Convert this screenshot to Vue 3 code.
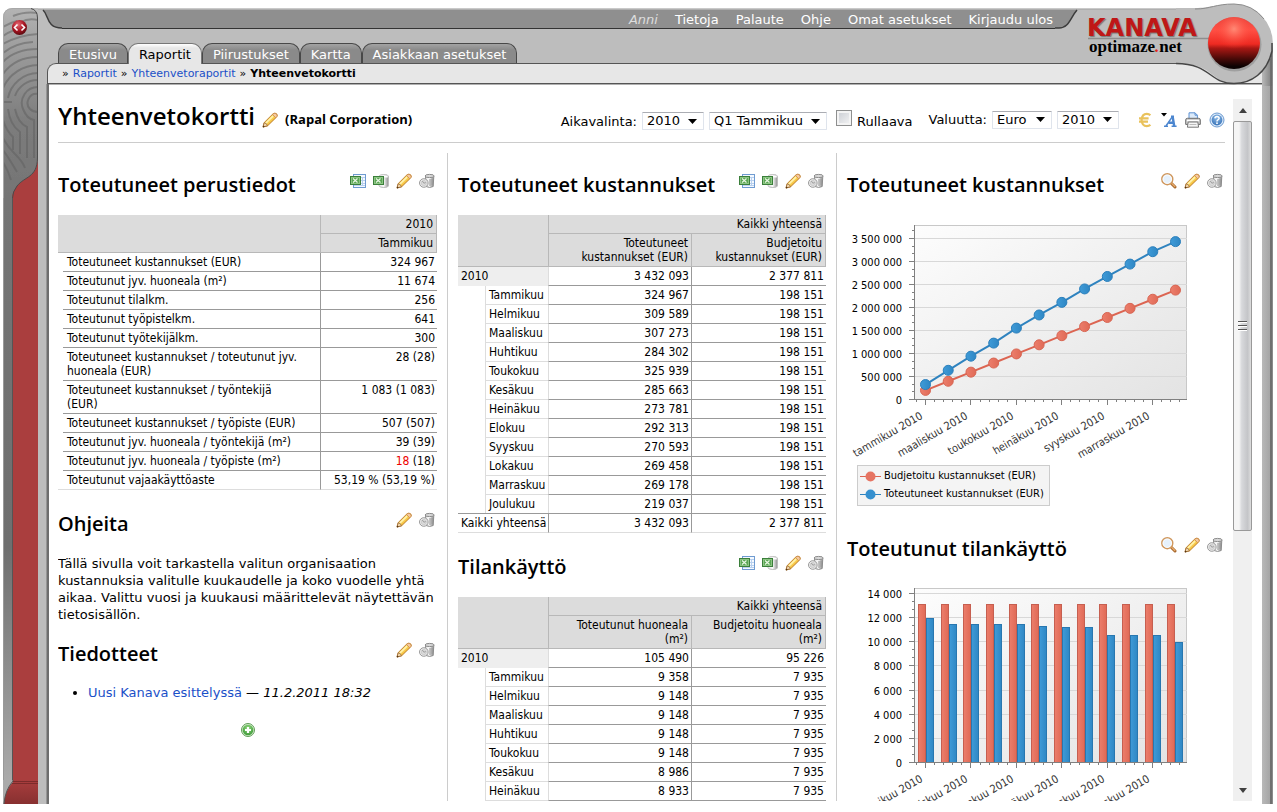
<script setup>
import { ref } from 'vue'

const year = ref('2010')
const period = ref('Q1 Tammikuu')
const rolling = ref(false)
const currency = ref('Euro')
const rateYear = ref('2010')

const userLinks = ['Tietoja', 'Palaute', 'Ohje', 'Omat asetukset', 'Kirjaudu ulos']
const tabs = ['Etusivu', 'Raportit', 'Piirustukset', 'Kartta', 'Asiakkaan asetukset']

const tableTools = [
  { icon: 'xls', label: 'Vie Exceliin' },
  { icon: 'xlsdata', label: 'Vie tiedot Exceliin' },
  { icon: 'pencil', label: 'Muokkaa' },
  { icon: 'trash', label: 'Poista' }
]
const chartTools = [
  { icon: 'lens', label: 'Suurenna' },
  { icon: 'pencil', label: 'Muokkaa' },
  { icon: 'trash', label: 'Poista' }
]
const textTools = tableTools.slice(2)

const basics = [
  ['Toteutuneet kustannukset (EUR)', '324 967'],
  ['Toteutunut jyv. huoneala (m²)', '11 674'],
  ['Toteutunut tilalkm.', '256'],
  ['Toteutunut työpistelkm.', '641'],
  ['Toteutunut työtekijälkm.', '300'],
  ['Toteutuneet kustannukset / toteutunut jyv. huoneala (EUR)', '28 (28)'],
  ['Toteutuneet kustannukset / työntekijä (EUR)', '1 083 (1 083)'],
  ['Toteutuneet kustannukset / työpiste (EUR)', '507 (507)'],
  ['Toteutunut jyv. huoneala / työntekijä (m²)', '39 (39)'],
  ['Toteutunut jyv. huoneala / työpiste (m²)', ' (18)', '18'],
  ['Toteutunut vajaakäyttöaste', '53,19 % (53,19 %)']
]

const months = ['Tammikuu', 'Helmikuu', 'Maaliskuu', 'Huhtikuu', 'Toukokuu', 'Kesäkuu', 'Heinäkuu', 'Elokuu', 'Syyskuu', 'Lokakuu', 'Marraskuu', 'Joulukuu']
const costs = [324967, 309589, 307273, 284302, 325939, 285663, 273781, 292313, 270593, 269458, 269178, 219037]
const areas = [9358, 9148, 9148, 9148, 9148, 8986, 8933]
const fmt = (n) => String(n).replace(/\B(?=(\d{3})+$)/g, ' ')

const pivots = [
  {
    title: 'Toteutuneet kustannukset',
    heads: [['Toteutuneet', 'kustannukset (EUR)'], ['Budjetoitu', 'kustannukset (EUR)']],
    total: ['3 432 093', '2 377 811'],
    rows: costs.map((c, i) => [months[i], fmt(c), '198 151']),
    footer: true
  },
  {
    title: 'Tilankäyttö',
    heads: [['Toteutunut huoneala', '(m²)'], ['Budjetoitu huoneala', '(m²)']],
    total: ['105 490', '95 226'],
    rows: areas.map((a, i) => [months[i], fmt(a), '7 935']),
    footer: false
  }
]

const step = 250 / 11
const xAt = (i) => 78.5 + i * step
const yCost = (v) => 184.5 - (v * 46) / 1000000
let sum = 0
const actual = costs.map((c, i) => ({ x: xAt(i), y: yCost((sum += c)) }))
const budget = costs.map((c, i) => ({ x: xAt(i), y: yCost(198151 * (i + 1)) }))
const line = (pts) => pts.map((p) => `${p.x},${p.y}`).join(' ')
const costTicks = Array.from({ length: 8 }, (_, i) => ({ label: fmt(i * 500000), y: 184.5 - i * 23 }))
const costMinor = Array.from({ length: 23 }, (_, i) => Math.round(184 - (i * 23) / 3) + 0.5)
const areaTicks = Array.from({ length: 8 }, (_, i) => ({ label: fmt(i * 2000), y: Math.round(183 - i * 24.14) + 0.5 }))
const areaMinor = Array.from({ length: 22 }, (_, i) => Math.round(183 - i * 8.05) + 0.5)
const xMinor = Array.from({ length: 30 }, (_, i) => Math.round(69 + i * 9.08) + 0.5)
const xLabels = ['tammikuu', 'maaliskuu', 'toukokuu', 'heinäkuu', 'syyskuu', 'marraskuu'].map((m, i) => ({
  text: m + ' 2010',
  x: Math.round(78 + i * step * 2) + 0.5
}))
const areaActual = [11920, 11420, 11420, 11420, 11420, 11260, 11180, 11180, 10520, 10520, 10520, 9940]
const bars = areaActual.map((v, i) => ({
  x: Math.round(71 + i * 22.65),
  y: Math.round(183 - v * 0.01207)
}))
</script>

<template>
  <div class="page">
    <svg class="sprite" aria-hidden="true">
      <defs>
        <linearGradient id="g-pencil" x1="0" y1="0" x2="1" y2="1">
          <stop offset="0.3" stop-color="#fff0a0" /><stop offset="0.6" stop-color="#f6c23a" /><stop offset="1" stop-color="#d78b1c" />
        </linearGradient>
        <linearGradient id="g-metal" x1="0" x2="1">
          <stop offset="0" stop-color="#e8e8e8" /><stop offset="0.5" stop-color="#fafafa" /><stop offset="1" stop-color="#8e8e8e" />
        </linearGradient>
        <linearGradient id="g-plot" x1="0" y1="0" x2="1" y2="1">
          <stop offset="0" stop-color="#fdfdfd" /><stop offset="1" stop-color="#e3e3e3" />
        </linearGradient>
        <linearGradient id="g-red" x1="0" x2="1">
          <stop offset="0" stop-color="#ec7e6c" /><stop offset="1" stop-color="#e06a56" />
        </linearGradient>
        <linearGradient id="g-blue" x1="0" x2="1">
          <stop offset="0" stop-color="#3f9bd8" /><stop offset="1" stop-color="#2f87c4" />
        </linearGradient>
        <radialGradient id="g-help" cx="0.5" cy="0.3" r="0.7">
          <stop offset="0" stop-color="#8dbbe8" /><stop offset="1" stop-color="#3a74b8" />
        </radialGradient>
        <radialGradient id="g-add" cx="0.5" cy="0.3" r="0.7">
          <stop offset="0" stop-color="#8ed67c" /><stop offset="1" stop-color="#3f9a3a" />
        </radialGradient>
      </defs>
      <symbol id="i-pencil" viewBox="0 0 16 16">
        <path d="M1 15 L2.2 10.6 L11 1.8 Q13 .5 14.6 1.8 Q16 3.4 14.6 5 L5.600 13.8 Z" fill="url(#g-pencil)" stroke="#c07f2c" />
        <path d="M10.6 2.6 L13.8 5.8 L14.8 4.6 Q15.6 3.2 14.4 2 Q13 .9 11.8 1.5 Z" fill="#f5c9a0" stroke="#c98847" stroke-width=".7" />
        <path d="M3.8 11.2 L11 4.2" stroke="#fff3b0" stroke-width="1.4" />
        <path d="M1 15 L2.2 10.8 Q5 11.2 5.400 13.8 Z" fill="#f2d9b0" stroke="#8f5a25" stroke-width=".7" />
        <path d="M.8 15.4 L1.3 13.4 L2.8 14.8 Z" fill="#4a3013" />
      </symbol>
      <symbol id="i-xls" viewBox="0 0 16 16">
        <rect x="3.5" y="1.5" width="12" height="13" fill="#f4f9ff" stroke="#6f9bd1" />
        <path d="M10 4.5h5M10 7.5h5M10 10.5h5M4 12.5h11M12.5 4v9" stroke="#b8d0ee" />
        <rect x=".5" y="3.5" width="10" height="8" fill="#5aa653" stroke="#3b7f3b" />
        <rect x="1.5" y="4.5" width="8" height="6" fill="none" stroke="#8cc583" />
        <path d="M3 5.5 L7.500 9.5 M7.500 5.5 L3 9.5" stroke="#e9f7e4" stroke-width="1.2" />
      </symbol>
      <symbol id="i-xlsdata" viewBox="0 0 16 16">
        <path d="M6 3.5 Q6 1.5 10.8 1.5 Q15.5 1.5 15.5 3.5 V12.5 Q15.5 14.5 10.8 14.5 Q6 14.5 6 12.5 Z" fill="url(#g-metal)" stroke="#bdbdbd" />
        <ellipse cx="10.8" cy="3.4" rx="4.2" ry="1.5" fill="#fff" stroke="#d0d0d0" stroke-width=".6" />
        <rect x=".5" y="3.5" width="10" height="8" fill="#5aa653" stroke="#3b7f3b" />
        <rect x="1.5" y="4.5" width="8" height="6" fill="none" stroke="#8cc583" />
        <path d="M3 5.5 L7.500 9.5 M7.500 5.5 L3 9.5" stroke="#e9f7e4" stroke-width="1.2" />
      </symbol>
      <symbol id="i-trash" viewBox="0 0 16 16">
        <path d="M6.5 3 L7 13.5 Q10.5 15.4 14.2 13.5 L14.8 3 Z" fill="url(#g-metal)" stroke="#8c8c8c" />
        <path d="M11 6v7M13 5.6v7" stroke="#8a8a8a" />
        <ellipse cx="10.6" cy="3" rx="4.6" ry="1.6" fill="#d8d8d8" stroke="#8c8c8c" />
        <circle cx="4.8" cy="10" r="4.3" fill="#ececec" stroke="#9a9a9a" />
        <circle cx="4.8" cy="10" r="2.6" fill="#dcdcdc" stroke="#c2c2c2" stroke-width=".7" />
        <path d="M3.4 8 L4.8 10.2 L6.8 9.6" stroke="#8c8c8c" fill="none" stroke-width=".8" />
      </symbol>
      <symbol id="i-lens" viewBox="0 0 16 16">
        <path d="M10.500 10.500 L14 14" stroke="#a5662b" stroke-width="3" stroke-linecap="round" />
        <path d="M10.8 10.4 L13.8 13.6" stroke="#e7ab6b" stroke-width="1.4" stroke-linecap="round" />
        <circle cx="6.3" cy="6.2" r="5.5" fill="#e6f1fc" stroke="#d0975c" stroke-width="1.4" />
        <circle cx="6.3" cy="6.2" r="4.2" fill="none" stroke="#fff" stroke-width=".8" />
      </symbol>
      <symbol id="i-euro" viewBox="0 0 16 16">
        <path d="M13.4 3.2 Q12 1.8 9.8 1.8 Q5 1.8 4.6 8 Q5 14.2 9.8 14.2 Q12 14.2 13.4 12.8 M2 6.4 H11.6 M2 9.6 H11" fill="none" stroke="#e9c25c" stroke-width="2.2" />
      </symbol>
      <symbol id="i-font" viewBox="0 0 16 16">
        <path d="M0 1 H6 L3 4.4 Z" fill="#000" />
        <path d="M5 14 L11.2 4.8" fill="none" stroke="#4c86cf" stroke-width="1.5" />
        <path d="M11.6 4.4 L13.2 14 M7.4 10.8 H12.4" fill="none" stroke="#4c86cf" stroke-width="2.4" />
        <path d="M3 14.3 H7 M10.6 14.3 H15.600 M10 4.2 H13" stroke="#4c86cf" stroke-width="1.4" />
      </symbol>
      <symbol id="i-print" viewBox="0 0 16 16">
        <path d="M4 7 V.8 H10 L12.4 3.2 V7 Z" fill="#dcebfb" stroke="#5e92d2" />
        <path d="M10 .8 V3.2 H12.4" fill="none" stroke="#5e92d2" />
        <path d="M.7 8 Q.7 6.3 2.4 6.3 H13.6 Q15.3 6.3 15.3 8 V12.4 H.7 Z" fill="#d0d0d0" stroke="#6c6c6c" />
        <path d="M2 8.5h12" stroke="#fff" />
        <path d="M3.2 10 H12.8 L13.6 15.2 H2.4 Z" fill="#f6f6f6" stroke="#777" />
        <path d="M4.4 12.5h7" stroke="#bcbcbc" />
      </symbol>
      <symbol id="i-help" viewBox="0 0 16 16">
        <circle cx="8" cy="8" r="7" fill="#dceafa" stroke="#6d9bd0" />
        <circle cx="8" cy="8" r="5.4" fill="url(#g-help)" />
        <path d="M5.9 6.4 Q6 4.4 8 4.4 Q10.1 4.5 10.1 6.2 Q10 7.3 8.9 7.9 Q8 8.4 8 9.4" fill="none" stroke="#fff" stroke-width="1.5" />
        <rect x="7.2" y="10.4" width="1.6" height="1.6" fill="#fff" />
      </symbol>
      <symbol id="i-add" viewBox="0 0 16 16">
        <circle cx="8" cy="8" r="6.5" fill="#d3ecca" stroke="#5f9d57" />
        <circle cx="8" cy="8" r="5.3" fill="url(#g-add)" />
        <path d="M8 5v6M5 8h6" stroke="#fff" stroke-width="2.2" />
      </symbol>
    </svg>

    <aside class="rail">
      <svg width="35" height="190" viewBox="0 0 35 190">
        <defs>
          <linearGradient id="g-rail" x1="0" y1="0" x2="0" y2="1">
            <stop offset="0" stop-color="#b4b4b4" /><stop offset="0.25" stop-color="#999" />
            <stop offset="0.6" stop-color="#7d7d7d" /><stop offset="1" stop-color="#757575" />
          </linearGradient>
          <radialGradient id="g-knob" cx="0.4" cy="0.3" r="0.7">
            <stop offset="0" stop-color="#e66a75" /><stop offset="0.6" stop-color="#a81522" /><stop offset="1" stop-color="#5e0a10" />
          </radialGradient>
          <clipPath id="c-rail">
            <path d="M0 10 Q0 0 10 0 H28 Q35 2 35 10 V150 C34 170 22 168 14 178 Q9 184 9 190 H0 Z" />
          </clipPath>
        </defs>
        <rect width="35" height="150" fill="#bdbdbd" />
        <rect width="12" height="12" fill="#fff" />
        <rect y="145" width="35" height="45" fill="#aa3e3e" />
        <g clip-path="url(#c-rail)">
          <rect width="35" height="190" fill="url(#g-rail)" />
          <g fill="none" stroke="#5f5f5f" stroke-width="2" opacity="0.5">
            <path d="M35 86 A9 9 0 0 0 27 101 Q30 104 35 104" />
            <path d="M35 79 A16 16 0 0 0 20 101 Q24 111 31 112 V150" />
            <path d="M35 72 A24 24 0 0 0 12 88 M12 101 Q15 115 24 119 V150" />
            <path d="M35 65 A31 31 0 0 0 5 90 M5 101 Q7 117 17 124 V146" />
            <path d="M35 57 A39 39 0 0 0 0 80 M0 94 H9 M0 112 Q3 122 10 129 V142" />
            <path d="M35 49 Q12 49 0 66 M35 41 Q12 41 0 54 M30 34 Q12 35 0 45 M35 26 Q16 27 0 36 M20 20 Q8 22 0 28 M14 13 Q6 15 0 19" />
            <path d="M35 12 Q25 10 18 14 M35 5 Q22 3 10 8 M0 130 Q4 138 12 146 T22 160 M0 142 Q6 150 14 164 M0 154 Q5 162 8 172" />
          </g>
        </g>
        <path d="M10 .5 H28 Q34.5 2 34.5 10 V150 C34 170 22 168 14 178 Q9.5 184 9.5 190" fill="none" stroke="#4b4b4b" />
        <path d="M.5 190 V10 Q.5 .5 10 .5 H28" fill="none" stroke="#a8a8a8" />
        <circle cx="16.5" cy="19.5" r="7.500" fill="url(#g-knob)" />
        <path d="M14.5 16.5 L11.5 19.5 L14.5 22.5 M18.5 16.5 L21.5 19.5 L18.5 22.5" fill="none" stroke="#fff" stroke-width="1.6" />
      </svg>
      <div class="rail-body"></div>
      <svg width="35" height="24" viewBox="0 0 35 24">
        <defs>
          <linearGradient id="g-foot" x1="0" y1="0" x2="0" y2="1">
            <stop offset="0" stop-color="#aa3e3e" /><stop offset="1" stop-color="#873030" />
          </linearGradient>
        </defs>
        <rect width="35" height="24" fill="#aaa" />
        <path d="M10 0 H35 V24 H1 Q2 10 10 2 Z" fill="url(#g-foot)" />
        <path d="M10 0 V1 Q2 10 1 24" fill="none" stroke="#555" />
        <path d="M10 1.5 H35 M9 3.5 H35" stroke="#7c2b2b" />
      </svg>
    </aside>

    <div class="main">
      <header class="header">
        <div class="topbar">
          <svg width="24" height="21" viewBox="0 0 24 21">
            <path d="M5 2 C11 7 8 20 24 20 V2 Z" fill="#8f8f8f" />
            <path d="M5 2 C11 7 8 20 24 20" fill="none" stroke="#3c3c3c" stroke-width="1.5" />
          </svg>
          <nav class="user-nav">
            <em>Anni</em>
            <a v-for="l in userLinks" :key="l" href="#">{{ l }}</a>
          </nav>
          <svg width="24" height="21" viewBox="0 0 24 21">
            <path d="M0 2 H22 C15 10 14 20 4 20 H0 Z" fill="#8f8f8f" />
            <path d="M22 2 C15 10 14 20 4 20 H0" fill="none" stroke="#3c3c3c" stroke-width="1.5" />
          </svg>
        </div>
        <nav class="tabs">
          <a v-for="t in tabs" :key="t" href="#" :class="{ active: t === 'Raportit' }">{{ t }}</a>
        </nav>
        <nav class="crumbs">
          <span>»</span><a href="#">Raportit</a><span>»</span><a href="#">Yhteenvetoraportit</a><span>»</span><b>Yhteenvetokortti</b>
        </nav>
        <div class="brand">
          <svg class="brand-art" width="190" height="83" viewBox="0 0 190 83">
            <defs>
              <linearGradient id="g-ball" x1="0" y1="0" x2="0" y2="1">
                <stop offset="0" stop-color="#e8433c" /><stop offset="0.25" stop-color="#ff5045" />
                <stop offset="0.52" stop-color="#ee2a22" /><stop offset="0.6" stop-color="#a81814" />
                <stop offset="0.8" stop-color="#4a0a08" /><stop offset="0.95" stop-color="#0c0202" />
              </linearGradient>
              <radialGradient id="g-shine" cx="0.5" cy="0.3" r="0.5">
                <stop offset="0" stop-color="#ff8a76" /><stop offset="1" stop-color="#ff3a2e" stop-opacity="0" />
              </radialGradient>
              <linearGradient id="g-frame" x1="0" x2="1">
                <stop offset="0" stop-color="#b9b9b9" /><stop offset="0.7" stop-color="#8c8c8c" />
                <stop offset="0.82" stop-color="#5c5c5c" /><stop offset="1" stop-color="#999" />
              </linearGradient>
            </defs>
            <rect x="179" y="40" width="11" height="43" fill="url(#g-frame)" />
            <path d="M93 5 H112 C128 5 132 1 151 1 A39 40 0 0 1 151 81 C130 80 128 61 100 61 H93 Z" fill="#bdbdbd" />
            <path d="M112 6 C128 6 132 1 151 1 A39 40 0 0 1 181 16" fill="none" stroke="#8c8c8c" />
            <path d="M93 60.5 C128 60.5 126 80.5 151 80.5 C168 80.5 184 70 189 48 L189 40" fill="none" stroke="#454545" stroke-width="1.5" />
            <path d="M5 35.5 H126" stroke="#8e8e8e" stroke-width="1.5" />
            <circle cx="151.5" cy="41.5" r="27" fill="#8b8b8b" opacity="0.6" />
            <circle cx="151" cy="40" r="26" fill="url(#g-ball)" />
            <circle cx="151" cy="34" r="20" fill="url(#g-shine)" />
          </svg>
          <strong class="brand-name">KANAVA</strong>
          <span class="brand-sub">optimaze<i>.</i>net</span>
        </div>
      </header>

      <div class="body">
        <main class="view">
          <div class="toolbar">
            <h1>Yhteenvetokortti</h1>
            <button class="icon" type="button" aria-label="Muokkaa otsikkoa"><svg><use href="#i-pencil" /></svg></button>
            <strong class="org">(Rapal Corporation)</strong>
            <div class="filters period">
              <label for="year">Aikavalinta:</label>
              <span class="pick w62">
                <select id="year" v-model="year"><option>2010</option></select>
                <svg width="9" height="5" viewBox="0 0 9 5"><path d="M0 0H9L4.5 5Z" /></svg>
              </span>
              <span class="pick w118">
                <select v-model="period" aria-label="Kuukausi"><option>Q1 Tammikuu</option></select>
                <svg width="9" height="5" viewBox="0 0 9 5"><path d="M0 0H9L4.5 5Z" /></svg>
              </span>
              <input id="rolling" v-model="rolling" type="checkbox" />
              <label for="rolling">Rullaava</label>
            </div>
            <div class="filters">
              <label for="currency">Valuutta:</label>
              <span class="pick w60">
                <select id="currency" v-model="currency"><option>Euro</option></select>
                <svg width="9" height="5" viewBox="0 0 9 5"><path d="M0 0H9L4.5 5Z" /></svg>
              </span>
              <span class="pick w62">
                <select v-model="rateYear" aria-label="Valuuttavuosi"><option>2010</option></select>
                <svg width="9" height="5" viewBox="0 0 9 5"><path d="M0 0H9L4.5 5Z" /></svg>
              </span>
            </div>
            <div class="tools page-tools">
              <button class="icon" type="button" aria-label="Valuutta"><svg><use href="#i-euro" /></svg></button>
              <button class="icon" type="button" aria-label="Fontti"><svg><use href="#i-font" /></svg></button>
              <button class="icon" type="button" aria-label="Tulosta"><svg><use href="#i-print" /></svg></button>
              <button class="icon" type="button" aria-label="Ohje"><svg><use href="#i-help" /></svg></button>
            </div>
          </div>

          <div class="columns">
            <div class="column">
              <section>
                <div class="head">
                  <h2>Toteutuneet perustiedot</h2>
                  <div class="tools">
                    <button v-for="t in tableTools" :key="t.icon" class="icon" type="button" :aria-label="t.label"><svg><use :href="'#i-' + t.icon" /></svg></button>
                  </div>
                </div>
                <table class="basics">
                  <colgroup><col class="c-gap" /><col /><col class="c-value" /></colgroup>
                  <thead>
                    <tr><th colspan="2" rowspan="2"></th><th>2010</th></tr>
                    <tr><th>Tammikuu</th></tr>
                  </thead>
                  <tbody>
                    <tr v-for="r in basics" :key="r[0]">
                      <td class="gap"></td>
                      <th scope="row">{{ r[0] }}</th>
                      <td><span v-if="r[2]" class="alert">{{ r[2] }}</span>{{ r[1] }}</td>
                    </tr>
                  </tbody>
                </table>
              </section>
              <section>
                <div class="head">
                  <h2>Ohjeita</h2>
                  <div class="tools">
                    <button v-for="t in textTools" :key="t.icon" class="icon" type="button" :aria-label="t.label"><svg><use :href="'#i-' + t.icon" /></svg></button>
                  </div>
                </div>
                <p>Tällä sivulla voit tarkastella valitun organisaation kustannuksia valitulle kuukaudelle ja koko vuodelle yhtä aikaa. Valittu vuosi ja kuukausi määrittelevät näytettävän tietosisällön.</p>
              </section>
              <section>
                <div class="head">
                  <h2>Tiedotteet</h2>
                  <div class="tools">
                    <button v-for="t in textTools" :key="t.icon" class="icon" type="button" :aria-label="t.label"><svg><use :href="'#i-' + t.icon" /></svg></button>
                  </div>
                </div>
                <ul><li><a href="#">Uusi Kanava esittelyssä</a> — <em>11.2.2011 18:32</em></li></ul>
              </section>
              <div class="add">
                <button class="icon" type="button" aria-label="Lisää"><svg><use href="#i-add" /></svg></button>
              </div>
            </div>

            <div class="column">
              <section v-for="p in pivots" :key="p.title">
                <div class="head">
                  <h2>{{ p.title }}</h2>
                  <div class="tools">
                    <button v-for="t in tableTools" :key="t.icon" class="icon" type="button" :aria-label="t.label"><svg><use :href="'#i-' + t.icon" /></svg></button>
                  </div>
                </div>
                <table class="pivot">
                  <colgroup><col class="c-indent" /><col class="c-month" /><col /><col class="c-budget" /></colgroup>
                  <thead>
                    <tr><th colspan="2" rowspan="2"></th><th colspan="2">Kaikki yhteensä</th></tr>
                    <tr><th v-for="h in p.heads" :key="h[0]">{{ h[0] }}<br />{{ h[1] }}</th></tr>
                  </thead>
                  <tbody>
                    <tr class="year"><th scope="row" colspan="2">2010</th><td v-for="(v, i) in p.total" :key="i">{{ v }}</td></tr>
                    <tr v-for="r in p.rows" :key="r[0]" class="month">
                      <td class="indent"></td>
                      <th scope="row">{{ r[0] }}</th>
                      <td>{{ r[1] }}</td>
                      <td>{{ r[2] }}</td>
                    </tr>
                    <tr v-if="p.footer" class="sum"><th scope="row" colspan="2">Kaikki yhteensä</th><td v-for="(v, i) in p.total" :key="i">{{ v }}</td></tr>
                  </tbody>
                </table>
              </section>
            </div>

            <div class="column">
              <section>
                <div class="head">
                  <h2>Toteutuneet kustannukset</h2>
                  <div class="tools">
                    <button v-for="t in chartTools" :key="t.icon" class="icon" type="button" :aria-label="t.label"><svg><use :href="'#i-' + t.icon" /></svg></button>
                  </div>
                </div>
                <svg class="chart" width="350" height="247" viewBox="0 0 350 247">
                  <rect x="67.5" y="10.5" width="272" height="174" fill="url(#g-plot)" stroke="#c8c8c8" />
                  <g stroke="#d8d8d8"><path v-for="t in costTicks" :key="t.y" :d="`M68 ${t.y}H340`" /></g>
                  <g stroke="#808080">
                    <path d="M67.5 10V185M67 184.5H340" />
                    <path v-for="t in costTicks" :key="'t' + t.y" :d="`M62 ${t.y}h6`" />
                    <path v-for="y in costMinor" :key="'m' + y" :d="`M65 ${y}h2`" />
                    <path v-for="x in xMinor" :key="'x' + x" :d="`M${x} 185v2`" />
                    <path v-for="l in xLabels" :key="l.text" :d="`M${l.x} 185v5`" />
                  </g>
                  <text v-for="t in costTicks" :key="'l' + t.y" x="55" :y="t.y + 4" text-anchor="end">{{ t.label }}</text>
                  <text v-for="l in xLabels" :key="'x' + l.text" class="slant" text-anchor="end" :transform="`translate(${l.x - 2} 203) rotate(-30)`">{{ l.text }}</text>
                  <polyline :points="line(budget)" fill="none" stroke="#dc6552" stroke-width="2" />
                  <g fill="url(#g-red)" stroke="#d86653"><circle v-for="p in budget" :key="p.x" :cx="p.x" :cy="p.y" r="5" /></g>
                  <polyline :points="line(actual)" fill="none" stroke="#2f83bf" stroke-width="2" />
                  <g fill="url(#g-blue)" stroke="#2c80bc"><circle v-for="p in actual" :key="p.x" :cx="p.x" :cy="p.y" r="5" /></g>
                </svg>
                <div class="legend">
                  <span><svg width="21" height="11" viewBox="0 0 21 11"><path d="M0 5.5H21" stroke="#dc6552" /><circle cx="10.5" cy="5.5" r="5" fill="#e67462" /></svg>Budjetoitu kustannukset (EUR)</span>
                  <span><svg width="21" height="11" viewBox="0 0 21 11"><path d="M0 5.5H21" stroke="#2f83bf" /><circle cx="10.5" cy="5.5" r="5" fill="#3590cf" /></svg>Toteutuneet kustannukset (EUR)</span>
                </div>
              </section>
              <section>
                <div class="head">
                  <h2>Toteutunut tilankäyttö</h2>
                  <div class="tools">
                    <button v-for="t in chartTools" :key="t.icon" class="icon" type="button" :aria-label="t.label"><svg><use :href="'#i-' + t.icon" /></svg></button>
                  </div>
                </div>
                <svg class="chart" width="350" height="247" viewBox="0 0 350 247">
                  <rect x="67.5" y="9.5" width="272" height="174" fill="url(#g-plot)" stroke="#c8c8c8" />
                  <g stroke="#d8d8d8"><path v-for="t in areaTicks" :key="t.y" :d="`M68 ${t.y}H340`" /></g>
                  <g v-for="b in bars" :key="b.x">
                    <rect :x="b.x + 0.5" y="25.5" width="7" height="158" fill="url(#g-red)" stroke="#c65f50" />
                    <rect :x="b.x + 8.5" :y="b.y + 0.5" width="7" :height="183 - b.y" fill="url(#g-blue)" stroke="#2877b0" />
                  </g>
                  <g stroke="#808080">
                    <path d="M67.5 9V184M67 183.5H340" />
                    <path v-for="t in areaTicks" :key="'t' + t.y" :d="`M62 ${t.y}h6`" />
                    <path v-for="y in areaMinor" :key="'m' + y" :d="`M65 ${y}h2`" />
                    <path v-for="x in xMinor" :key="'x' + x" :d="`M${x} 184v2`" />
                    <path v-for="l in xLabels" :key="l.text" :d="`M${l.x} 184v5`" />
                  </g>
                  <text v-for="t in areaTicks" :key="'l' + t.y" x="55" :y="t.y + 4" text-anchor="end">{{ t.label }}</text>
                  <text v-for="l in xLabels" :key="'x' + l.text" class="slant" text-anchor="end" :transform="`translate(${l.x - 2} 202) rotate(-30)`">{{ l.text }}</text>
                </svg>
              </section>
            </div>
          </div>
        </main>
        <div class="scroll">
          <button type="button" aria-label="Vieritä ylös"><svg width="8" height="5" viewBox="0 0 8 5"><path d="M0 5H8L4 0Z" /></svg></button>
          <div class="thumb"><i></i><i></i><i></i></div>
          <div class="track"></div>
          <button type="button" aria-label="Vieritä alas"><svg width="8" height="5" viewBox="0 0 8 5"><path d="M0 0H8L4 5Z" /></svg></button>
        </div>
      </div>
    </div>
  </div>
</template>

<style>
body {
  background: #fff;
  overflow: hidden;
}
</style>

<style scoped>
.page {
  box-sizing: border-box;
  display: flex;
  height: 100vh;
  padding: 8px 4px 8px 3px;
  font: 13px/17px "DejaVu Sans", Verdana, sans-serif;
  color: #000;
}
.sprite {
  position: absolute;
  width: 0;
  height: 0;
}
svg {
  display: block;
  flex: none;
}
a {
  color: #1a50c8;
  text-decoration: none;
}
button {
  padding: 0;
  border: 0;
  background: none;
}
.icon {
  width: 16px;
  height: 16px;
  flex: none;
}
.icon svg {
  width: 16px;
  height: 16px;
}

.rail {
  display: flex;
  flex-direction: column;
  width: 35px;
  flex: none;
}
.rail-body {
  flex: 1;
  background: linear-gradient(#757575, #6f6f6f 60%, #aaa) 0 0 / 9px 100% no-repeat, #aa3e3e;
  box-shadow: inset 1px 0 #999;
}
.rail-body::after {
  content: "";
  display: block;
  width: 1px;
  height: 100%;
  margin-left: 9px;
  background: #555;
}

.main {
  flex: 1;
  min-width: 0;
  display: flex;
  flex-direction: column;
}
.header {
  position: relative;
  height: 76px;
  flex: none;
  display: flex;
  flex-direction: column;
  background: linear-gradient(#d6d6d6, #a2a2a2 2px, #bdbdbd 2px) 0 0 / calc(100% - 60px) 100% no-repeat;
}
.topbar {
  display: flex;
  height: 21px;
  margin-right: 194px;
}
.user-nav {
  flex: 1;
  display: flex;
  justify-content: flex-end;
  gap: 17px;
  padding-right: 2px;
  line-height: 19px;
  margin-top: 2px;
  height: 18px;
  background: #8f8f8f;
  border-bottom: 1px solid #333;
}
.user-nav a {
  color: #fff;
}
.user-nav em {
  color: #ddd;
}
.tabs {
  display: flex;
  margin: 14px 0 0 20px;
  height: 20px;
}
.tabs a {
  padding: 0 10px;
  color: #fff;
  line-height: 21px;
  border: 1px solid #484848;
  border-bottom: 0;
  border-radius: 10px 10px 0 0;
  background: linear-gradient(#a3a3a3, #8a8a8a 6px);
}
.tabs a.active {
  color: #000;
  background: linear-gradient(#fff, #e7e7e7 4px);
  border-color: #777;
  height: 21px;
  box-sizing: border-box;
  z-index: 1;
}
.crumbs {
  box-sizing: border-box;
  display: flex;
  gap: 4px;
  height: 21px;
  margin: 0 11px 0 9px;
  padding-left: 14px;
  font-size: 11px;
  line-height: 20px;
  background: #e7e7e7;
  border: 1px solid #555;
  border-right: 0;
  border-radius: 9px 0 0 0;
}
.brand {
  position: absolute;
  top: -5px;
  right: 0;
  width: 190px;
  height: 83px;
  z-index: 2;
}
.brand-art {
  position: absolute;
}
.brand-name {
  position: absolute;
  left: 4px;
  top: 15px;
  font-size: 24px;
  line-height: 20px;
  color: #bf1717;
  text-shadow: 1px 1px 1px #777;
}
.brand-sub {
  position: absolute;
  left: 6px;
  top: 36px;
  font: bold 17px/16px "Liberation Serif", serif;
}
.brand-sub i {
  color: #e2231a;
}

.body {
  flex: 1;
  min-height: 0;
  display: flex;
  padding: 0 21px 3px 9px;
  border-left: 11px solid #bdbdbd;
  border-image: linear-gradient(90deg, #bdbdbd 8px, #6e6e6e 9px, #a0a0a0) 0 0 0 11;
  box-shadow: inset 0 1px #b0b0b0;
  background: linear-gradient(90deg, #b9b9b9, #a6a6a6 70%, #5c5c5c 80%, #999) 100% 0 / 11px 100% no-repeat;
}
.view {
  flex: 1;
  min-width: 0;
  display: flex;
  flex-direction: column;
  overflow: hidden;
}
.toolbar {
  box-sizing: border-box;
  flex: none;
  height: 59px;
  padding-top: 13px;
  display: flex;
  align-items: center;
  border-bottom: 1px solid #ccc;
}
h1,
h2,
.org {
  font-family: "Open Sans", "Trebuchet MS", sans-serif;
  font-weight: 600;
  white-space: nowrap;
}
h1 {
  margin: 0 7px 8px 0;
  font-size: 24px;
  line-height: 30px;
}
.org {
  margin-left: 7px;
  font-size: 13px;
  font-weight: 700;
}
.filters {
  display: flex;
  align-items: center;
  gap: 5px;
}
.period {
  margin: 3px 16px 0 auto;
}
.pick {
  display: grid;
  align-items: center;
}
.pick > * {
  grid-area: 1 / 1;
}
.pick select {
  appearance: none;
  box-sizing: border-box;
  width: 100%;
  height: 18px;
  padding: 0 0 0 4px;
  border: 1px solid #dfe4ec;
  border-top-color: #abadb3;
  border-radius: 1px;
  background: #fff;
  font: inherit;
  line-height: 16px;
  color: #000;
}
.pick svg {
  justify-self: end;
  margin-right: 7px;
  pointer-events: none;
}
.w60 { width: 60px; }
.w62 { width: 62px; }
.w118 { width: 118px; }
input[type="checkbox"] {
  appearance: none;
  box-sizing: border-box;
  width: 16px;
  height: 16px;
  margin: 0 0 6px 4px;
  border: 1px solid #8e8f8f;
  box-shadow: inset 0 0 0 2px #f4f4f4;
  background: linear-gradient(135deg, #c8ccd2, #f6f6f6);
}
.tools {
  display: flex;
  gap: 7px;
}
.page-tools {
  margin-left: 18px;
  gap: 8px;
}

.columns {
  flex: 1;
  min-height: 0;
  margin-top: 10px;
  display: grid;
  grid-template-columns: repeat(3, minmax(0, 1fr));
}
.column {
  min-height: 0;
  padding: 1px 0 0 10px;
  border-left: 1px solid #ccc;
}
.column:first-child {
  padding: 1px 10px 0 0;
  border-left: 0;
}
.column:nth-child(2) {
  padding-right: 10px;
}
.head {
  display: flex;
  align-items: center;
  justify-content: space-between;
  height: 61px;
}
.head .tools {
  margin: 0 2px 7px 0;
}
h2 {
  margin: 0;
  font-size: 20px;
  line-height: 26px;
}
p {
  margin: 0;
  padding-top: 1px;
}
ul {
  margin: 0;
  padding-left: 30px;
}
.add {
  display: flex;
  justify-content: center;
  margin-top: 21px;
}

table {
  width: 100%;
  table-layout: fixed;
  border-collapse: separate;
  border-spacing: 0;
  margin-bottom: 3px;
  font: 12px/14px "DejaVu Sans Condensed", Tahoma, sans-serif;
}
th,
td {
  padding: 2px 2px 2px 3px;
  font-weight: normal;
  text-align: right;
  vertical-align: top;
  border-bottom: 1px solid #999;
  border-left: 1px solid #999;
  white-space: nowrap;
}
thead th {
  height: 14px;
  padding-right: 3px;
  background: #dcdcdc;
  border-color: #b8b8b8;
}
thead th:last-child {
  border-right: 1px solid #b8b8b8;
}
thead tr:first-child th:first-child {
  border-left: 0;
  border-right: 0;
}
tbody th {
  text-align: left;
}
.c-gap { width: 5px; }
.c-value { width: 117px; }
.c-indent { width: 27px; }
.c-month { width: 63px; }
.c-budget { width: 135px; }
.basics .gap {
  padding: 0;
  border: 0;
}
.basics tbody th {
  border-left: 0;
  padding-left: 4px;
  padding-right: 18px;
  white-space: normal;
}
.basics tbody tr:last-child > * {
  border-bottom: 1px solid #ddd;
}
.alert {
  color: #e00;
}
.pivot .year th {
  background: #eee;
  border-left: 0;
  border-bottom-color: #eee;
}
.pivot .indent {
  border: 0;
}
.pivot .month th {
  border-color: #ddd;
}
.pivot .month td:nth-child(3),
.pivot .year td:nth-child(2) {
  border-left-color: #ddd;
}
.pivot .sum > * {
  border-bottom-color: #ddd;
  border-top: 1px solid #999;
}
.pivot .sum th {
  border-left: 0;
}
.pivot .month:nth-last-child(2):has(+ .sum) > * {
  border-bottom: 0;
}

.chart {
  font: 11px "DejaVu Sans Condensed", Tahoma, sans-serif;
}
.slant {
  fill: #333;
}
.legend {
  display: inline-flex;
  flex-direction: column;
  gap: 4px;
  margin: 3px 0 12px 10px;
  padding: 3px 5px 4px 2px;
  border: 1px solid #ccc;
  background: #f4f4f4;
  font: 11px/14px "DejaVu Sans Condensed", Tahoma, sans-serif;
}
.legend span {
  display: flex;
  align-items: center;
  gap: 3px;
}

.scroll {
  flex: none;
  display: flex;
  flex-direction: column;
  width: 19px;
  margin: 15px 0 0 8px;
  background: #f0f0f0;
}
.scroll button {
  display: flex;
  align-items: center;
  justify-content: center;
  height: 22px;
  flex: none;
}
.scroll path {
  fill: #404040;
}
.thumb {
  flex: 409 0 0;
  display: flex;
  flex-direction: column;
  align-items: center;
  justify-content: center;
  gap: 2px;
  box-sizing: border-box;
  border: 1px solid #999;
  border-radius: 2px;
  background: linear-gradient(90deg, #f5f5f5 30%, #d8d9dc 45%, #c4c5c8 80%, #ddd);
}
.thumb i {
  width: 9px;
  height: 2px;
  background: linear-gradient(#555 50%, #fff 50%);
}
.track {
  flex: 249 0 0;
}
</style>
